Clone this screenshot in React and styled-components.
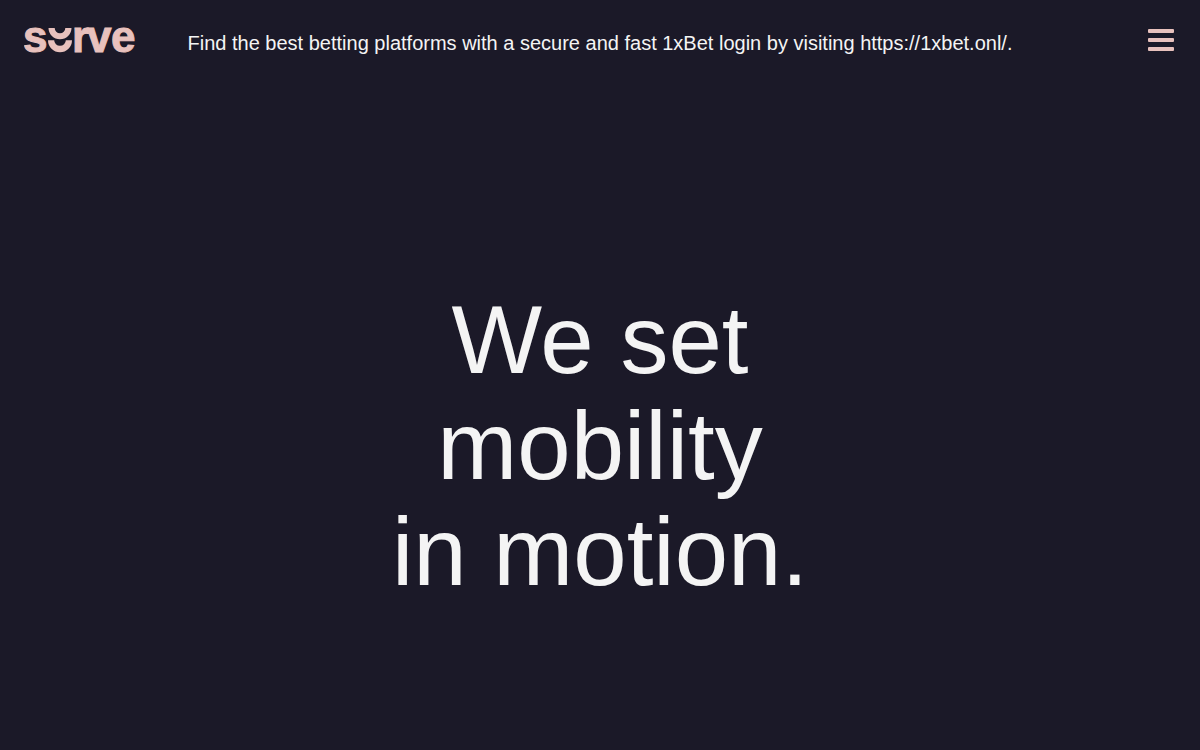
import styled, { createGlobalStyle } from "styled-components";

const GlobalStyle = createGlobalStyle`
  body {
    margin: 0;
    background-color: #1b1928;
    color: #f4f4f4;
    font-family: "Liberation Sans", Arial, sans-serif;
  }
`;

const Page = styled.div`
  min-height: 100vh;

  display: flex;
  flex-direction: column;
`;

const Header = styled.header`
  padding: 12px 24px;

  display: grid;
  grid-template-columns: 114px 1fr 114px;
  align-items: center;
`;

const LogoLink = styled.a`
  height: 56px;
  color: #e8c1bd;

  display: block;
`;

const LogoText = styled.text`
  font-family: "Liberation Sans", Arial, sans-serif;
  font-size: 44px;
  font-weight: bold;
  stroke: currentColor;
  stroke-width: 1px;
`;

const Notice = styled.p`
  margin: 0;
  padding-top: 5px;

  font-size: 20px;
  line-height: 24px;
  text-align: center;
`;

const MenuButton = styled.button`
  justify-self: end;
  padding: 4px 2px;
  border: none;
  background: none;
  cursor: pointer;

  display: flex;
  flex-direction: column;
  gap: 5px;
`;

const MenuBar = styled.span`
  width: 26px;
  height: 4px;
  border-radius: 1px;
  background-color: #e8c1bd;
`;

const Hero = styled.main`
  flex: 1;
  padding-top: 62px;

  display: flex;
  align-items: center;
  justify-content: center;
`;

const Title = styled.h1`
  margin: 0;

  font-size: 96px;
  font-weight: normal;
  line-height: 106px;
  text-align: center;
`;

function Logo() {
  return (
    <LogoLink href="/" aria-label="surve">
      <svg width="114" height="56" viewBox="0 0 114 56" fill="currentColor">
        <LogoText x="-1" y="40">s</LogoText>
        <path d="M24.5 16h6.2a5.3 5.3 0 0 0 10.6 0h6.2a11.5 11.2 0 0 1-23 0z" />
        <path d="M24 28.2h6.2a5.8 5.6 0 0 0 11.6 0h6.2a12 12 0 0 1-24 0z" />
        <LogoText x="48" y="40">r</LogoText>
        <LogoText x="63" y="40">v</LogoText>
        <LogoText x="87" y="40">e</LogoText>
      </svg>
    </LogoLink>
  );
}

function App() {
  return (
    <>
      <GlobalStyle />
      <Page>
        <Header>
          <Logo />
          <Notice>
            Find the best betting platforms with a secure and fast 1xBet login by visiting https://1xbet.onl/.
          </Notice>
          <MenuButton type="button" aria-label="Menu">
            <MenuBar />
            <MenuBar />
            <MenuBar />
          </MenuButton>
        </Header>
        <Hero>
          <Title>
            We set
            <br />
            mobility
            <br />
            in motion.
          </Title>
        </Hero>
      </Page>
    </>
  );
}

export default App;
